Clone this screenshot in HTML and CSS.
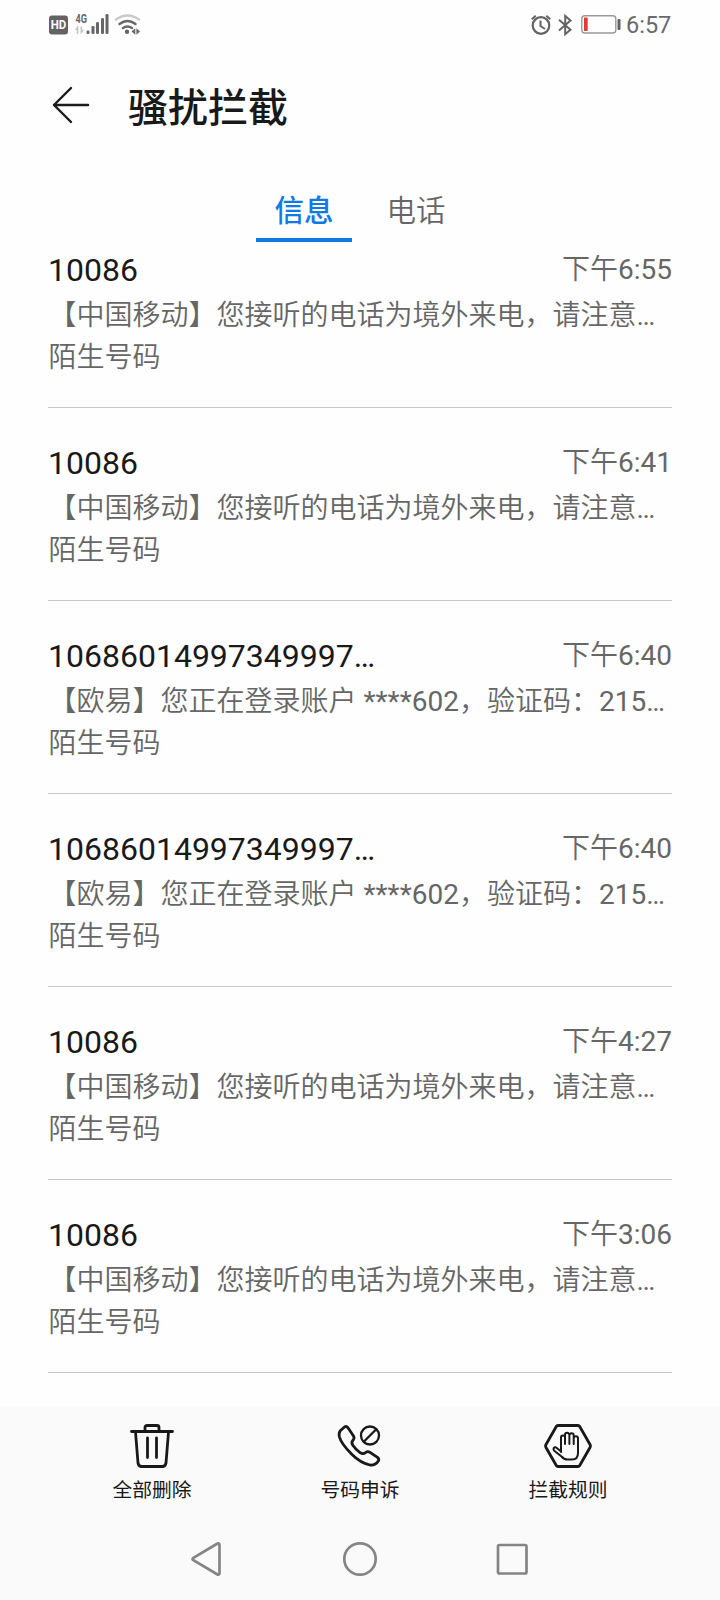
FILE: index.html
```html
<!DOCTYPE html>
<html lang="zh-CN">
<head>
<meta charset="utf-8">
<title>骚扰拦截</title>
<link rel="stylesheet" href="styles.css">
</head>
<body>
<div class="screen">
  <header class="status">
    <svg class="status-left" width="96" height="50" viewBox="0 0 96 50">
      <rect x="1" y="15.500" width="19" height="19" rx="3" fill="#636363"/>
      <text x="10.500" y="29.300" class="hd" textLength="15.500" lengthAdjust="spacingAndGlyphs">HD</text>
      <text x="27.500" y="22.500" class="net" textLength="11.500" lengthAdjust="spacingAndGlyphs">4G</text>
      <g fill="#c4c4c4"><path d="M29.500 26l-2.500 4h1.700v4h1.600v-8zM33 34l3-4h-1.800v-3.500h-1.600v7.500z"/></g>
      <g fill="#666"><rect x="38.500" y="30.500" width="3" height="3.500" rx="1.300"/><rect x="43.500" y="26" width="3" height="8" rx="1.300"/><rect x="48" y="22" width="3" height="12" rx="1.300"/><rect x="53" y="18" width="3" height="16" rx="1.300"/><rect x="57.500" y="14" width="3" height="20" rx="1.300"/></g>
      <g fill="none" stroke-width="2.400" stroke-linecap="round"><path d="M68 19.500Q79.500 11.500 91 19.500" stroke="#c9c9c9"/><path d="M71.500 24Q79.500 18 87.500 24M75 28Q79.500 25 84 28" stroke="#666"/></g>
      <g fill="#666"><circle cx="79" cy="31.800" r="2.200"/><path d="M83.500 31.500l3.800-3.200v6.400zM92 31.500l-3.600-3.200v6.400z"/></g>
    </svg>
    <div class="status-right">
      <svg width="96" height="50" viewBox="0 0 96 50" fill="none" stroke="#636363">
        <circle cx="11" cy="25.500" r="8.300" stroke-width="2.200"/>
        <path d="M10.500 20.500v5.500l4.500 3M1.800 19.300l4-3.600M16.300 15.700l4 3.600" stroke-width="2"/>
        <path d="M29 19.800l11.500 9.900-5.300 4.500V16l5.300 4.500-11.500 10" stroke-width="2"/>
        <rect x="51.800" y="15.700" width="34" height="17.300" rx="3" stroke="#999" stroke-width="1.400"/>
        <rect x="54" y="17.500" width="3.700" height="13.500" rx=".5" fill="#e33a31" stroke="none"/>
        <rect x="87.500" y="19" width="3" height="11" rx="1.200" fill="#636363" stroke="none"/>
      </svg>
      <span class="clock">6:57</span>
    </div>
  </header>

  <div class="titlebar">
    <svg width="38" height="40" viewBox="0 0 38 40" fill="none" stroke="#1a1a1a" stroke-width="2.400" stroke-linecap="round" stroke-linejoin="round"><path d="M36 19H2M19 2L2 19l17 17"/></svg>
    <h1 class="title">骚扰拦截</h1>
  </div>

  <nav class="tabs">
    <div class="tab active">信息</div>
    <div class="tab">电话</div>
  </nav>

  <main class="list">
    <section class="item"><div class="head"><span class="number">10086</span><span class="time">下午<span class="latin">6:55</span></span></div><p class="line">【中国移动】您接听的电话为境外来电，请注意<span class="latin">…</span></p><p class="line">陌生号码</p></section>
    <section class="item"><div class="head"><span class="number">10086</span><span class="time">下午<span class="latin">6:41</span></span></div><p class="line">【中国移动】您接听的电话为境外来电，请注意<span class="latin">…</span></p><p class="line">陌生号码</p></section>
    <section class="item"><div class="head"><span class="number">10686014997349997…</span><span class="time">下午<span class="latin">6:40</span></span></div><p class="line">【欧易】您正在登录账户<span class="latin"> ****602</span>，验证码：<span class="latin">215…</span></p><p class="line">陌生号码</p></section>
    <section class="item"><div class="head"><span class="number">10686014997349997…</span><span class="time">下午<span class="latin">6:40</span></span></div><p class="line">【欧易】您正在登录账户<span class="latin"> ****602</span>，验证码：<span class="latin">215…</span></p><p class="line">陌生号码</p></section>
    <section class="item"><div class="head"><span class="number">10086</span><span class="time">下午<span class="latin">4:27</span></span></div><p class="line">【中国移动】您接听的电话为境外来电，请注意<span class="latin">…</span></p><p class="line">陌生号码</p></section>
    <section class="item"><div class="head"><span class="number">10086</span><span class="time">下午<span class="latin">3:06</span></span></div><p class="line">【中国移动】您接听的电话为境外来电，请注意<span class="latin">…</span></p><p class="line">陌生号码</p></section>
  </main>

  <footer class="bottom">
    <div class="actions">
      <div class="action">
        <svg class="icon" viewBox="0 0 48 48"><path d="M3.500 9.500h41M17 9V5.500a2 2 0 0 1 2-2h10a2 2 0 0 1 2 2V9M7.500 10l2.500 31a4 4 0 0 0 4 3.500h20a4 4 0 0 0 4-3.500l2.500-31M19.500 16v19.500M28.500 16v19.500"/></svg>
        <span class="label">全部删除</span>
      </div>
      <div class="action">
        <svg class="icon" viewBox="0 0 48 48"><path d="M4.500 8.500L8.500 5q2-1.200 3.500.8l5.500 8.200q1.200 2-.2 3.800-2.500 2.500-.5 5.500 3 4.500 7.500 7.500 2.700 1.700 5.200-.2 2.200-1.800 4.500-.3l7.500 5q2 1.500.8 3.700-2.800 4.500-8.300 4-9.500-2-18-10.500Q5 21.500 3.300 14.500 2.600 10.500 4.500 8.500z"/><circle cx="34" cy="13.500" r="9" stroke-width="2.300"/><path d="M28 19.500l12-12" stroke-width="2.300"/></svg>
        <span class="label">号码申诉</span>
      </div>
      <div class="action">
        <svg class="icon" viewBox="0 0 48 48"><path d="M14 3.500h20a2 2 0 0 1 1.700 1L46 22.500a3 3 0 0 1 0 3L35.700 43.500a2 2 0 0 1-1.700 1H14a2 2 0 0 1-1.700-1L2 25.500a3 3 0 0 1 0-3L12.300 4.500a2 2 0 0 1 1.700-1z"/><path stroke-width="2" d="M17 30V15.500a2 2 0 0 1 4 0V22v-9a2 2 0 0 1 4.400 0v9-8.500a2 2 0 0 1 4.300 0V22v-5.500a2 2 0 0 1 4.300 0V31q0 6.500-6 6.500h-4.500q-3.500 0-6-3L10 28.500q-1.300-2.500.8-3.200 1-.2 2 .7l4.200 3.500"/></svg>
        <span class="label">拦截规则</span>
      </div>
    </div>
    <div class="navbar">
      <svg width="36" height="36" viewBox="0 0 36 36"><path d="M29.500 3.500v29a1.300 1.300 0 0 1-2 1L3 19a1.300 1.300 0 0 1 0-2L27.500 2.500a1.300 1.300 0 0 1 2 1z"/></svg>
      <svg width="36" height="36" viewBox="0 0 36 36"><circle cx="18" cy="18" r="15.700"/></svg>
      <svg width="36" height="36" viewBox="0 0 36 36"><rect x="4" y="4" width="28.500" height="28.500" rx="1.500"/></svg>
    </div>
  </footer>
</div>
</body>
</html>
```
FILE: styles.css
```css
* { box-sizing: border-box; }
body { margin: 0; background: #fff; font-family: Roboto, "Noto Sans CJK SC", sans-serif; color: #191919; }
.screen { width: 720px; height: 1600px; display: flex; flex-direction: column; overflow: hidden; background: #fefefe; }
.status { height: 50px; padding: 0 49px 0 48px; display: flex; justify-content: space-between; }
.status-right { display: flex; align-items: center; }
.clock { width: 45px; font-size: 23.500px; line-height: 51px; color: #6a6a6a; white-space: nowrap; }
.hd { font: 700 13px Roboto, sans-serif; fill: #fff; text-anchor: middle; }
.net { font: 700 12.500px Roboto, sans-serif; fill: #666; }
.titlebar { height: 112px; padding: 0 52px; display: flex; align-items: center; gap: 38px; }
.title { margin: 0; padding-top: 5px; font-size: 40px; line-height: 60px; font-weight: 500; }
.tabs { height: 80px; display: flex; justify-content: center; gap: 16px; padding-top: 16px; }
.tab { width: 96px; height: 64px; line-height: 66px; text-align: center; font-size: 29.500px; color: #666; font-weight: 350; }
.tab.active { color: #0f7ae6; font-weight: 500; border-bottom: 4px solid #0f7ae6; }
.list { flex: 1; padding: 0 48px; }
.item { height: 193px; padding-top: 35px; border-bottom: 1px solid #c8c8c8; }
.item:first-child { height: 166px; padding-top: 8px; }
.head { height: 42px; display: flex; justify-content: space-between; line-height: 40px; }
.number { font-size: 32px; }
.time { font-size: 28px; line-height: 40px; color: #666; font-weight: 350; }
.line { margin: 0; padding-left: .5px; height: 42px; line-height: 48px; font-size: 28px; font-weight: 350; color: #666; white-space: nowrap; }
.latin { font-weight: 400; }
.bottom { height: 194px; background: #fafafa; }
.actions { height: 114px; padding: 16px 48px 0; display: flex; }
.action { flex: 1; display: flex; flex-direction: column; align-items: center; }
.icon { width: 48px; height: 48px; fill: none; stroke: #191919; stroke-width: 2.8; stroke-linecap: round; stroke-linejoin: round; }
.label { font-size: 19.800px; line-height: 30px; margin-top: 6px; }
.navbar { height: 80px; padding: 0 190px; display: flex; justify-content: space-between; padding-top: 21px; }
.navbar svg { fill: none; stroke: #858585; stroke-width: 2.7; }
```
